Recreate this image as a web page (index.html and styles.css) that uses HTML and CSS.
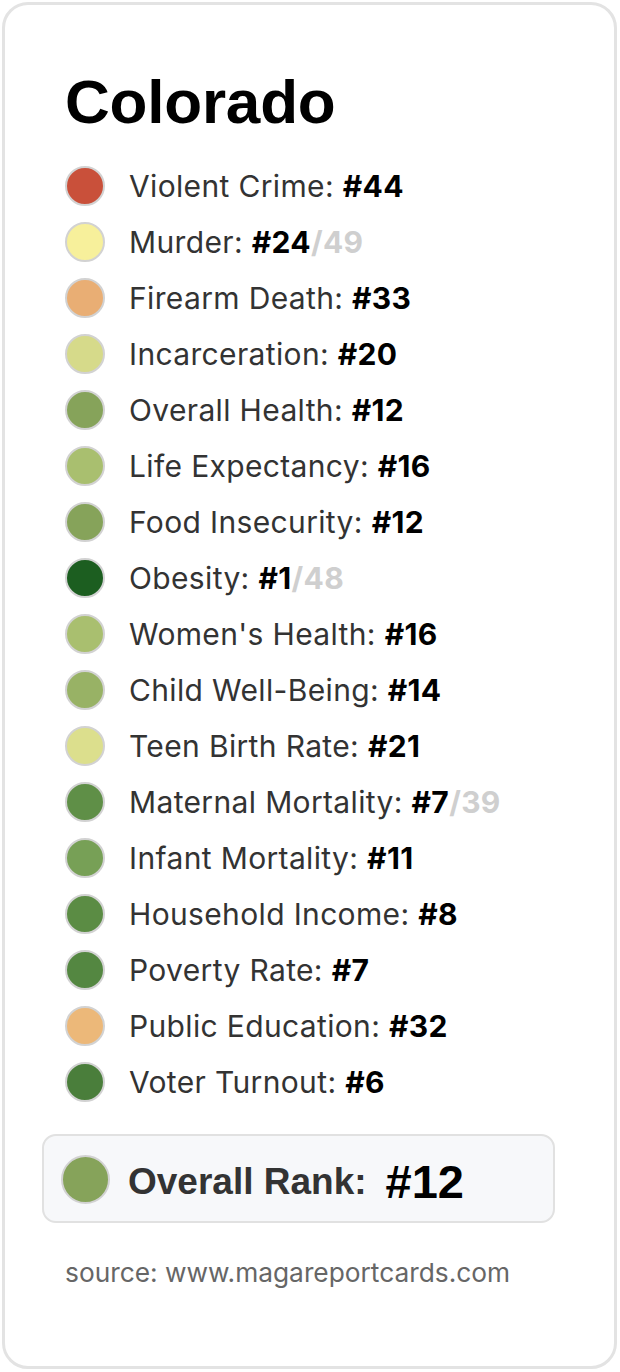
FILE: index.html
```html
<!DOCTYPE html>
<html>
<head>
<meta charset="utf-8">
<link rel="stylesheet" href="styles.css">
</head>
<body>
<div class="card">
  <h1 class="title">Colorado</h1>
  <ul class="list">
    <li class="row"><span class="dot c-red"></span><span class="label">Violent Crime: <b class="rank">#44</b></span></li>
    <li class="row"><span class="dot c-yellow"></span><span class="label">Murder: <b class="rank">#24</b><b class="of">/49</b></span></li>
    <li class="row"><span class="dot c-orange"></span><span class="label">Firearm Death: <b class="rank">#33</b></span></li>
    <li class="row"><span class="dot c-khaki"></span><span class="label">Incarceration: <b class="rank">#20</b></span></li>
    <li class="row"><span class="dot c-g12"></span><span class="label">Overall Health: <b class="rank">#12</b></span></li>
    <li class="row"><span class="dot c-g16"></span><span class="label">Life Expectancy: <b class="rank">#16</b></span></li>
    <li class="row"><span class="dot c-g12"></span><span class="label">Food Insecurity: <b class="rank">#12</b></span></li>
    <li class="row"><span class="dot c-g1"></span><span class="label">Obesity: <b class="rank">#1</b><b class="of">/48</b></span></li>
    <li class="row"><span class="dot c-g16"></span><span class="label">Women's Health: <b class="rank">#16</b></span></li>
    <li class="row"><span class="dot c-g14"></span><span class="label">Child Well-Being: <b class="rank">#14</b></span></li>
    <li class="row"><span class="dot c-g21"></span><span class="label">Teen Birth Rate: <b class="rank">#21</b></span></li>
    <li class="row"><span class="dot c-g7"></span><span class="label">Maternal Mortality: <b class="rank">#7</b><b class="of">/39</b></span></li>
    <li class="row"><span class="dot c-g11"></span><span class="label">Infant Mortality: <b class="rank">#11</b></span></li>
    <li class="row"><span class="dot c-g8"></span><span class="label">Household Income: <b class="rank">#8</b></span></li>
    <li class="row"><span class="dot c-g7b"></span><span class="label">Poverty Rate: <b class="rank">#7</b></span></li>
    <li class="row"><span class="dot c-orange2"></span><span class="label">Public Education: <b class="rank">#32</b></span></li>
    <li class="row"><span class="dot c-g6"></span><span class="label">Voter Turnout: <b class="rank">#6</b></span></li>
  </ul>
  <div class="overall">
    <span class="dot big c-g12"></span>
    <span class="overall-label">Overall Rank:</span>
    <span class="overall-rank">#12</span>
  </div>
  <p class="source">source: www.magareportcards.com</p>
</div>
</body>
</html>
```

FILE: styles.css
```css
html, body {
  margin: 0;
  padding: 0;
  background: #ffffff;
}
body {
  padding: 2px 3px 3px 2px;
  font-family: Inter, "Liberation Sans", Arial, sans-serif;
}
.card {
  box-sizing: border-box;
  height: 1367px;
  border: 3px solid #e3e3e3;
  border-radius: 26px;
  padding: 61px 59px 0 37px;
  background: #fff;
}
.title {
  margin: 0 0 0 23px;
  font-family: "Liberation Sans", Arial, sans-serif;
  font-weight: 700;
  font-size: 62px;
  line-height: 72px;
  color: #000;
  letter-spacing: -0.2px;
}
.list {
  list-style: none;
  margin: 20px 0 0 23px;
  padding: 0;
  display: flex;
  flex-direction: column;
}
.row {
  display: flex;
  align-items: center;
  height: 56px;
  gap: 24px;
}
.dot {
  flex: none;
  box-sizing: border-box;
  width: 40px;
  height: 40px;
  border-radius: 50%;
  border: 2px solid #d2d2d2;
}
.label {
  font-size: 30px;
  letter-spacing: 0.35px;
  color: #333;
  white-space: nowrap;
}
.rank {
  font-weight: 700;
  color: #000;
}
.of {
  font-weight: 700;
  color: #cfcfcf;
}
.overall {
  margin-top: 24px;
  box-sizing: border-box;
  height: 89px;
  display: flex;
  align-items: center;
  padding: 6px 0 0 17px;
  border: 2px solid #e1e1e1;
  border-radius: 14px;
  background: #f7f8fa;
}
.dot.big {
  width: 49px;
  height: 49px;
  margin: -4px 18px 0 0;
}
.overall-label {
  font-family: "Liberation Sans", Arial, sans-serif;
  font-weight: 700;
  font-size: 37px;
  color: #333;
  margin-right: 19px;
}
.overall-rank {
  font-family: "Liberation Sans", Arial, sans-serif;
  font-weight: 700;
  font-size: 47px;
  color: #000;
}
.source {
  margin: 34px 0 0 23px;
  font-size: 26.3px;
  color: #666;
}
.c-red { background: #c9503a; }
.c-yellow { background: #f7f09b; }
.c-orange { background: #e9ae74; }
.c-khaki { background: #d6da8a; }
.c-g12 { background: #86a35a; }
.c-g16 { background: #a9bf6f; }
.c-g1 { background: #1c5e20; }
.c-g14 { background: #98b265; }
.c-g21 { background: #dcdf8d; }
.c-g7 { background: #5f8f47; }
.c-g11 { background: #77a056; }
.c-g8 { background: #5b8c44; }
.c-g7b { background: #548741; }
.c-orange2 { background: #ecb879; }
.c-g6 { background: #4a7e3b; }
```
